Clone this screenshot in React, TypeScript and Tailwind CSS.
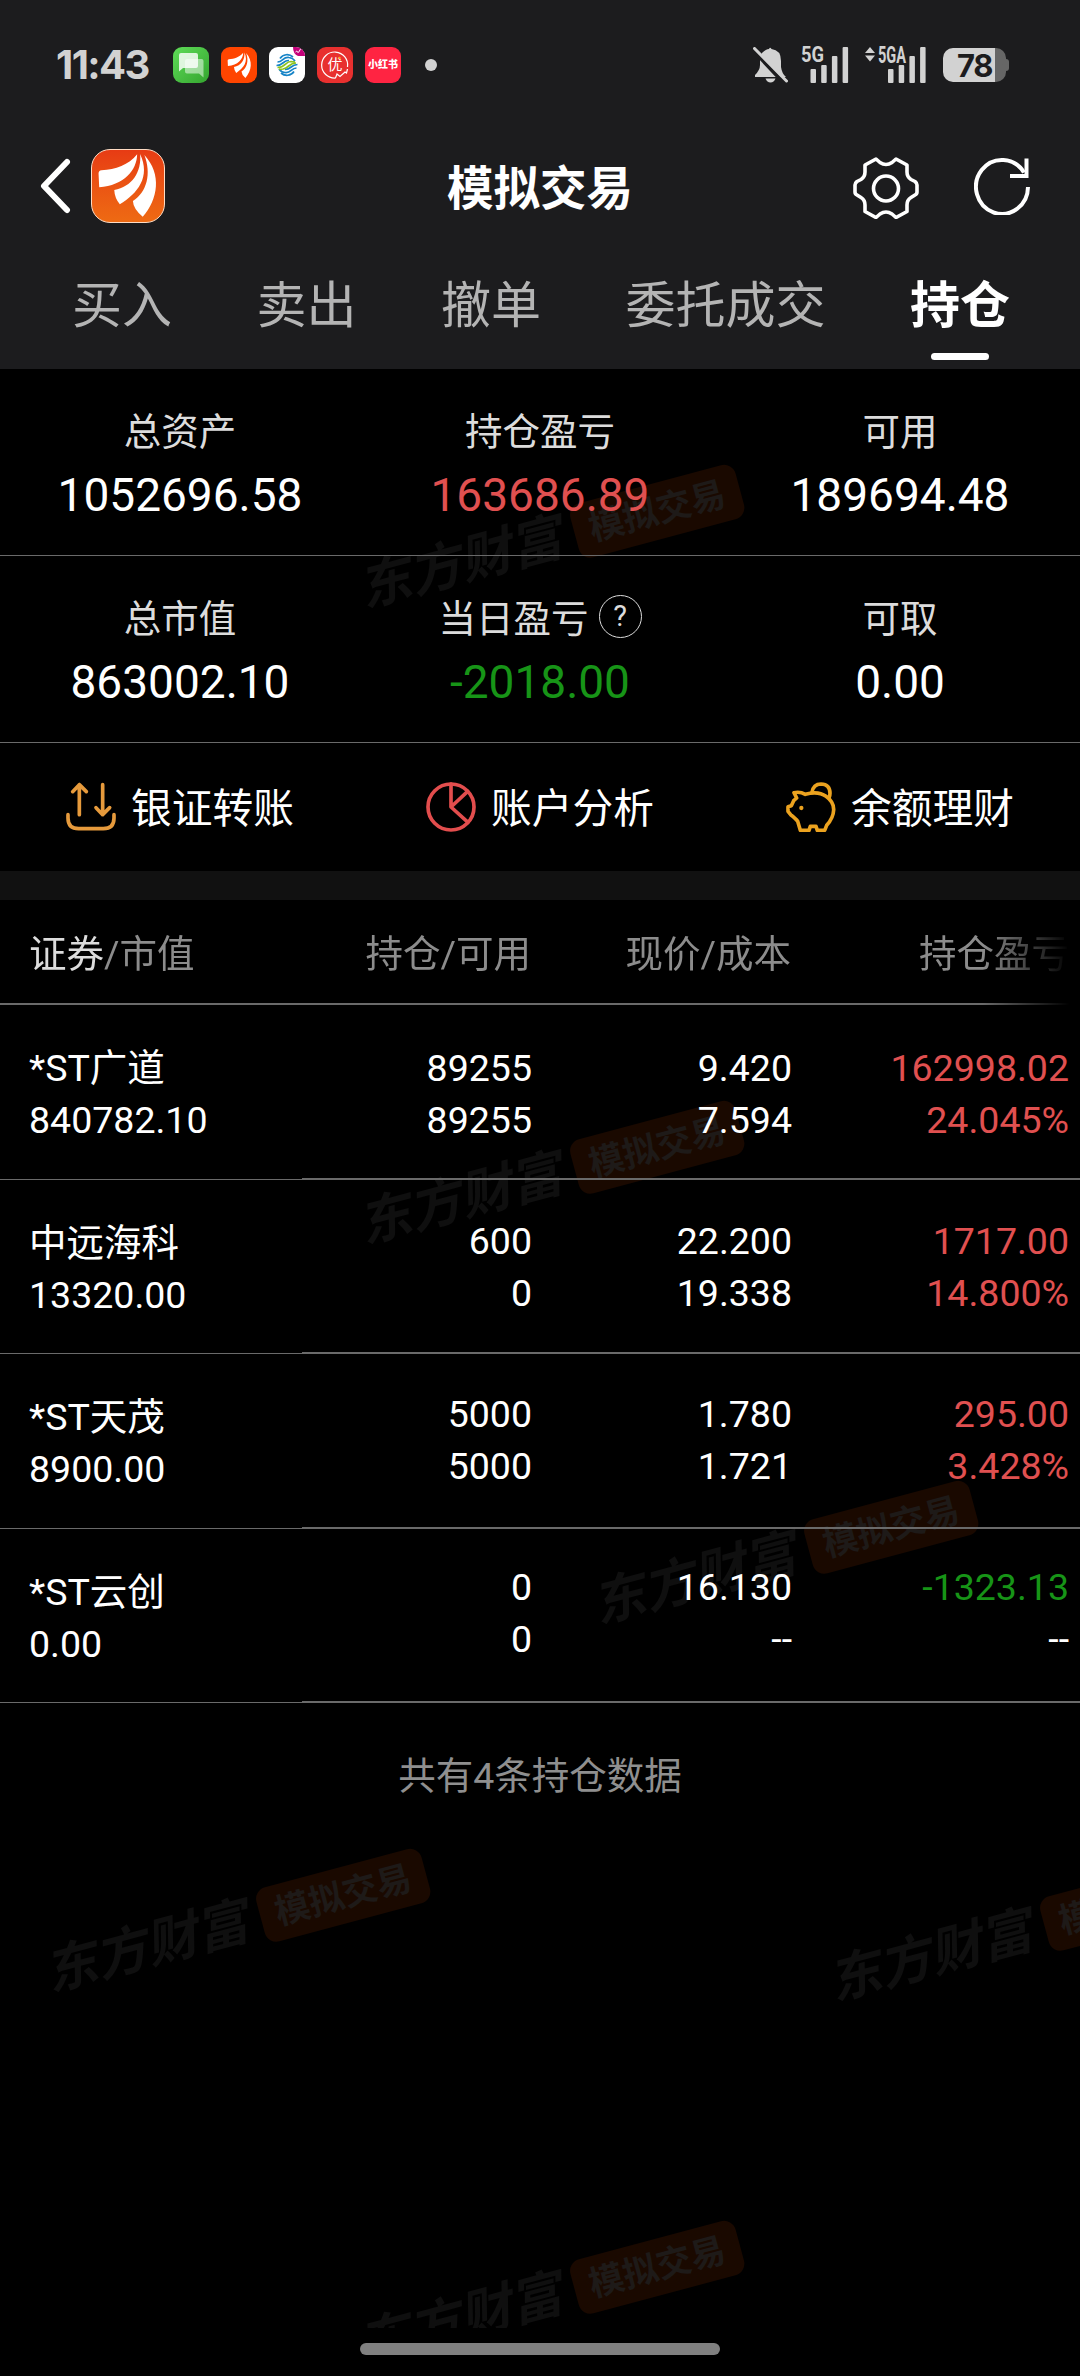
import React from 'react';

interface Holding {
  name: string;
  value: string;
  amount: string;
  available: string;
  price: string;
  cost: string;
  profit: string;
  ratio: string;
  profitClass: string;
  ratioClass: string;
}

const RED = 'text-[#e05050]';
const GREEN = 'text-[#179417]';

const holdings: Holding[] = [
  { name: '*ST广道', value: '840782.10', amount: '89255', available: '89255', price: '9.420', cost: '7.594', profit: '162998.02', ratio: '24.045%', profitClass: RED, ratioClass: RED },
  { name: '中远海科', value: '13320.00', amount: '600', available: '0', price: '22.200', cost: '19.338', profit: '1717.00', ratio: '14.800%', profitClass: RED, ratioClass: RED },
  { name: '*ST天茂', value: '8900.00', amount: '5000', available: '5000', price: '1.780', cost: '1.721', profit: '295.00', ratio: '3.428%', profitClass: RED, ratioClass: RED },
  { name: '*ST云创', value: '0.00', amount: '0', available: '0', price: '16.130', cost: '--', profit: '-1323.13', ratio: '--', profitClass: GREEN, ratioClass: 'text-white' },
];

const tabs = ['买入', '卖出', '撤单', '委托成交', '持仓'];

// Center points of the background marks
const marks = [
  { x: 550, y: 540 },
  { x: 550, y: 1176 },
  { x: 784, y: 1556 },
  { x: 236, y: 1924 },
  { x: 1020, y: 1933 },
  { x: 550, y: 2296 },
];

const Feathers: React.FC<{ className?: string }> = ({ className }) => (
  <svg viewBox="0 0 220 220" className={className} fill="#fff">
    <path d="M20 72Q20 63 29 62C72 59 112 46 138 13C137 62 98 108 22 114Z" />
    <path d="M147 12C152 68 122 112 68 122Q69 146 85 166C140 132 180 82 147 12Z" />
    <path d="M160 15C182 72 168 128 125 156Q126 180 155 204C202 150 214 74 160 15Z" />
  </svg>
);

const SignalBars = () => (
  <g fill="#d2d2d2">
    <rect x="0" y="22" width="5.5" height="14" rx="1" />
    <rect x="10.7" y="18" width="5.5" height="18" rx="1" />
    <rect x="21.4" y="9" width="5.5" height="27" rx="1" />
    <rect x="32.1" y="0" width="5.5" height="36" rx="1" />
  </g>
);

const StatusBar = () => (
  <div className="flex h-[130px] items-center pl-[56px] pr-[71px]">
    <span className="w-[95px] font-['Inter'] text-[40px] leading-none font-bold tracking-[-1.6px] text-[#d2d2d2]">11:43</span>
    <div className="ml-[22px] flex gap-3">
      <div className="size-9 rounded-[9px] bg-linear-to-br from-[#5fdc58] to-[#34a52f]">
        <svg viewBox="0 0 36 36">
          <path d="M14 12h14.500a2 2 0 0 1 2 2v16.500l-4.500-4H14a2 2 0 0 1-2-2V14a2 2 0 0 1 2-2z" fill="#fff" fillOpacity=".5" />
          <path d="M8 6h15a2 2 0 0 1 2 2v11a2 2 0 0 1-2 2H10l-4 3.500V8a2 2 0 0 1 2-2z" fill="#fff" fillOpacity=".82" />
        </svg>
      </div>
      <div className="flex size-9 items-center justify-center rounded-[9px] bg-[#ff4500]">
        <Feathers className="size-[29px]" />
      </div>
      <div className="size-9 overflow-hidden rounded-[9px] bg-white">
        <svg viewBox="0 0 36 36" fill="none" strokeWidth="1.700">
          <path d="M24 0h12v9h-7q-5-2-5-9z" fill="#c4007a" />
          <path d="M26.500 5q1.500-2 2 0t3-3" stroke="#fff" strokeWidth="1" />
          <g stroke="#1784c7">
            <path d="M11 11.500C14 7 20 6.500 24 10" />
            <path d="M8.500 15C14 15 14 9.500 20 10.500Q24 11 26 14" />
            <path d="M7.500 18.500C14.500 18.500 14 13 20 13.500" />
            <path d="M28.500 17.500C21.500 17.500 22 23 16 22.500" />
            <path d="M27.500 21C22 21 22 26.500 16 25.500Q12 25 10 22" />
            <path d="M25 24.500C22 29 16 29.500 12 26" />
          </g>
          <path d="M8.500 20.500C17 20.500 16 14.500 22 14.500L26 15M10 22.500L14 22C20 21 20 16 27 16" stroke="#8cc31f" />
        </svg>
      </div>
      <div className="relative flex size-9 items-center justify-center rounded-[9px] bg-[#e8302f]">
        <svg viewBox="0 0 36 36" className="absolute inset-0" fill="none" stroke="#fff" strokeWidth="1.200">
          <path d="M30.500 20A13 13 0 1 0 18.500 31l1.500-4 3 2.500 5-4.500 1.500 1 1-4" />
          <circle cx="22.500" cy="11" r="1.200" fill="#ffa51f" stroke="none" />
        </svg>
        <span className="text-[15px] leading-none text-white">优</span>
      </div>
      <div className="flex size-9 items-center justify-center rounded-[9px] bg-[#ff2442]">
        <span className="text-[10px] leading-none font-black whitespace-nowrap text-white">小红书</span>
      </div>
    </div>
    <span className="ml-6 size-3 rounded-full bg-[#d2d2d2]" />

    <div className="ml-auto flex items-center">
      <svg className="h-9 w-[35px]" viewBox="0 0 35 36">
        <path d="M9 6Q13 2 16 2Q17-.5 18.500 2Q28 3 28 14V20Q29 27 33 30H2V28Q7 23 7 18V12Q7 9 9 6z" fill="#d2d2d2" />
        <path d="M12.500 31.500h10q-1.500 4-5 4t-5-4z" fill="#d2d2d2" />
        <path d="M2 5L32 37" stroke="#1c1c1e" strokeWidth="4" />
        <path d="M1.500 1.500L33.500 34" stroke="#d2d2d2" strokeWidth="3" strokeLinecap="round" />
      </svg>
      <svg className="ml-[13px] h-9 w-12 overflow-visible" viewBox="0 0 48 36">
        <text x="0" y="15" fontFamily="Roboto" fontSize="22" fontWeight="700" textLength="23" lengthAdjust="spacingAndGlyphs" fill="#d2d2d2">5G</text>
        <g transform="translate(9.500 0)"><SignalBars /></g>
      </svg>
      <svg className="ml-[16px] h-9 w-[62px] overflow-visible" viewBox="0 0 62 36">
        <path d="M0 6l5-6 5 6zM0 8.500h10l-5 6z" fill="#d2d2d2" />
        <text x="13" y="15.500" fontFamily="Roboto" fontSize="23" fontWeight="700" textLength="28" lengthAdjust="spacingAndGlyphs" fill="#d2d2d2">5GA</text>
        <g transform="translate(23 0)"><SignalBars /></g>
      </svg>
      <div className="ml-[16px] flex items-center">
        <div className="flex h-[34px] w-[63px] items-center justify-center rounded-[10px] bg-linear-to-r from-[#d2d2d2] from-[83%] to-[#666] to-[83%]">
          <span className="font-['Inter'] text-[31px] leading-none font-bold tracking-[-1.500px] text-[#1c1c1e]">78</span>
        </div>
        <span className="h-3 w-[3px] rounded-r-full bg-[#666]" />
      </div>
    </div>
  </div>
);

const NavBar = () => (
  <div className="flex h-[112px] items-center pl-10 pr-[50px]">
    <svg className="h-[56px] w-[32px]" viewBox="0 0 32 56" fill="none" stroke="#fff" strokeWidth="6" strokeLinejoin="round" strokeLinecap="round">
      <path d="M27 4L4 28L27 52" />
    </svg>
    <div className="ml-[19px] size-[74px] rounded-[19px] border border-[#ffdcc4] bg-linear-to-b from-[#e73b14] to-[#ee6a13]">
      <Feathers className="size-[72px]" />
    </div>
    <h1 className="ml-[282px] mt-[6px] text-[46.500px] leading-none font-bold whitespace-nowrap text-white">模拟交易</h1>
    <svg className="ml-auto mt-1 h-[62px] w-[66px]" viewBox="0 0 66 62" fill="none" stroke="#fff" strokeWidth="3.600" strokeLinejoin="round">
      <path d="M23 2L27 5.500Q33 9.500 39 5.500L43 2L54 8V15Q54 20 58 22.500L62 24.500Q64 26 64 28V35Q64 37 62 38L58 40.500Q54 43 54 48V54.500L43 60.500L39 57Q33 53 27 57L23 60.500L12 54.500V48Q12 43 8 40.500L4 38Q2 37 2 35V28Q2 26 4 24.500L8 22.500Q12 20 12 15V8Z" />
      <circle cx="33" cy="31.500" r="12.500" />
    </svg>
    <svg className="ml-[55px] h-[58px] w-[56px]" viewBox="0 0 56 58" fill="none" stroke="#fff" strokeWidth="4">
      <path d="M54 30A26 27 0 1 1 50 15.500" />
      <path d="M52.500 1.500V19H36" />
    </svg>
  </div>
);

const Stat: React.FC<{ label: string; value: string; color?: string; help?: boolean }> = ({ label, value, color = 'text-white', help }) => (
  <div className="flex flex-1 flex-col items-center">
    <div className="flex h-[56px] items-center text-[37.500px] leading-none text-[#dcdcdc]">
      <span className="mt-[3px]">{label}</span>
      {help && (
        <span className="ml-[10px] mb-[3px] flex size-[43px] items-center justify-center rounded-full border border-[#dcdcdc] text-[29px]">?</span>
      )}
    </div>
    <div className={`mt-[7px] text-[46px] leading-[58px] ${color}`}>{value}</div>
  </div>
);

const Action: React.FC<{ label: string; children: React.ReactNode }> = ({ label, children }) => (
  <div className="flex flex-1 items-center justify-center">
    <svg className="size-[50px]" viewBox="0 0 150 150" fill="none" strokeWidth="11" strokeLinecap="round" strokeLinejoin="round">
      {children}
    </svg>
    <span className="ml-[15px] mt-[5px] text-[40.700px] leading-none text-white">{label}</span>
  </div>
);

const Watermark: React.FC<{ x: number; y: number }> = ({ x, y }) => (
  <div className="absolute flex -translate-x-1/2 -translate-y-1/2 -rotate-[15deg] items-center gap-[14px] whitespace-nowrap" style={{ left: x, top: y }}>
    <span className="text-[52px] leading-none font-bold text-[#0f0f0f] italic">东方财富</span>
    <span className="flex h-[56px] w-[171px] items-center justify-center rounded-[12px] bg-[#1a0900] text-[35px] leading-none font-bold text-[#1e1a18]">模拟交易</span>
  </div>
);

const HoldingsTable = () => (
  <div>
    <div className="mask-r-from-[91%] mask-r-to-[99%] flex h-[105px] border-b-2 border-[#6a6a6a] text-[37.500px] leading-[108px] text-[#8c8c8c]">
      <div className="w-[302px] pl-[29px]"><span className="text-[#dcdcdc]">证券</span>/市值</div>
      <div className="w-[229px] text-right">持仓/可用</div>
      <div className="w-[260px] text-right">现价/成本</div>
      <div className="w-[278px] text-right">持仓盈亏</div>
    </div>
    <div className="flex text-[37.500px] leading-[52px] text-white">
      <div className="w-[302px]">
        {holdings.map((item) => (
          <div key={item.name} className="h-[174.500px] border-b border-[#6a6a6a] pt-[37px] pl-[29px]">
            <div>{item.name}</div>
            <div>{item.value}</div>
          </div>
        ))}
      </div>
      <div className="flex-1">
        {holdings.map((item, index) => (
          <div key={item.name} className="flex h-[174.500px] border-b-2 border-[#6a6a6a] text-right" style={{ paddingTop: 37 - index * 1.6 }}>
            <div className="w-[230px]">
              <div>{item.amount}</div>
              <div>{item.available}</div>
            </div>
            <div className="w-[260px]">
              <div>{item.price}</div>
              <div>{item.cost}</div>
            </div>
            <div className="w-[277px]">
              <div className={item.profitClass}>{item.profit}</div>
              <div className={item.ratioClass}>{item.ratio}</div>
            </div>
          </div>
        ))}
      </div>
    </div>
  </div>
);

export default function App() {
  return (
    <div className="relative isolate flex h-[2376px] w-[1080px] flex-col overflow-hidden bg-black font-['Roboto','Noto_Sans_CJK_SC',sans-serif]">
      <div className="absolute inset-x-0 top-0 -z-10 h-[2328px] overflow-hidden">
        {marks.map((mark) => (
          <Watermark key={`${mark.x}-${mark.y}`} x={mark.x} y={mark.y} />
        ))}
      </div>

      <header className="h-[369px] bg-[#1c1c1e]">
        <StatusBar />
        <NavBar />
        <nav className="flex h-[127px] gap-[84.500px] pl-[72px]">
          {tabs.map((tab) => (
            <div key={tab} className="flex flex-col items-center">
              <span className={`mt-[29px] text-[50px] leading-[70px] ${tab === '持仓' ? 'font-bold text-white' : 'text-[#b4b4b4]'}`}>{tab}</span>
              {tab === '持仓' && <span className="mt-[12px] h-[7px] w-[58px] rounded-full bg-white" />}
            </div>
          ))}
        </nav>
      </header>

      {/* Account summary */}
      <section className="flex h-[187px] border-b border-[#6a6a6a] pt-[34px]">
        <Stat label="总资产" value="1052696.58" />
        <Stat label="持仓盈亏" value="163686.89" color={RED} />
        <Stat label="可用" value="189694.48" />
      </section>
      <section className="flex h-[187px] border-b border-[#6a6a6a] pt-[34px]">
        <Stat label="总市值" value="863002.10" />
        <Stat label="当日盈亏" value="-2018.00" color={GREEN} help />
        <Stat label="可取" value="0.00" />
      </section>
      <section className="flex h-[128px]">
        <Action label="银证转账">
          <g stroke="#e69a3c">
            <path d="M40 98V8M20 29L40 8L61 29M110 8V98M90 77L110 98L131 77" />
            <path d="M6 98V108Q6 140 38 140H112Q144 140 144 108V98" />
          </g>
        </Action>
        <Action label="账户分析">
          <g stroke="#e24d4d">
            <circle cx="75" cy="75" r="69" />
            <path d="M75 6V75L125 28M75 75L126 121" />
          </g>
        </Action>
        <Action label="余额理财">
          <g stroke="#eba21f">
            <path d="M24 32Q42 28 58 37Q96 26 120 43Q144 60 143 84Q142 108 122 130L116 145H94L90 133H73L69 145H43L35 118Q30 110 14 98L6 88V74L16 71L23 56L32 48Z" />
            <path d="M78 31Q82 6 105 6Q132 7 132 34Q132 42 129 48" />
            <circle cx="46" cy="78" r="6.500" fill="#eba21f" stroke="none" />
          </g>
        </Action>
      </section>
      <div className="h-[29px] bg-[#111]" />

      <HoldingsTable />
      <p className="mt-[47px] text-center text-[37.500px] leading-[52px] text-[#8f8f8f]">共有4条持仓数据</p>

      <div className="mx-auto mt-auto mb-[21px] h-3 w-[360px] rounded-full bg-[#808080]" />
    </div>
  );
}
